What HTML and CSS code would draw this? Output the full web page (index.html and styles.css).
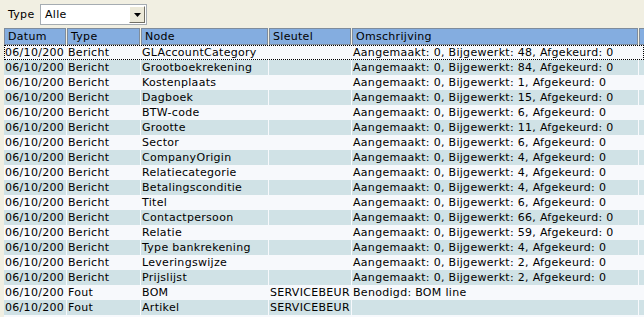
FILE: index.html
```html
<!DOCTYPE html>
<html>
<head>
<meta charset="utf-8">
<link rel="stylesheet" href="styles.css">
</head>
<body>
<div class="toolbar">
  <span class="lbl">Type</span>
  <div class="select">
    <span class="val">Alle</span>
    <span class="btn"><svg width="7" height="4" viewBox="0 0 7 4"><path d="M0 0h7L3.5 4z" fill="#000"/></svg></span>
  </div>
</div>
<div class="grid">
  <div class="row head">
    <div class="c">Datum</div><div class="c">Type</div><div class="c">Node</div><div class="c">Sleutel</div><div class="c">Omschrijving</div><div class="c"></div>
  </div>
  <div class="body">
  <div class="row focus"><div class="c">06/10/200</div><div class="c">Bericht</div><div class="c">GLAccountCategory</div><div class="c"></div><div class="c">Aangemaakt: 0, Bijgewerkt: 48, Afgekeurd: 0</div><div class="c"></div></div>
  <div class="row alt"><div class="c">06/10/200</div><div class="c">Bericht</div><div class="c">Grootboekrekening</div><div class="c"></div><div class="c">Aangemaakt: 0, Bijgewerkt: 84, Afgekeurd: 0</div><div class="c"></div></div>
  <div class="row"><div class="c">06/10/200</div><div class="c">Bericht</div><div class="c">Kostenplaats</div><div class="c"></div><div class="c">Aangemaakt: 0, Bijgewerkt: 1, Afgekeurd: 0</div><div class="c"></div></div>
  <div class="row alt"><div class="c">06/10/200</div><div class="c">Bericht</div><div class="c">Dagboek</div><div class="c"></div><div class="c">Aangemaakt: 0, Bijgewerkt: 15, Afgekeurd: 0</div><div class="c"></div></div>
  <div class="row"><div class="c">06/10/200</div><div class="c">Bericht</div><div class="c">BTW-code</div><div class="c"></div><div class="c">Aangemaakt: 0, Bijgewerkt: 6, Afgekeurd: 0</div><div class="c"></div></div>
  <div class="row alt"><div class="c">06/10/200</div><div class="c">Bericht</div><div class="c">Grootte</div><div class="c"></div><div class="c">Aangemaakt: 0, Bijgewerkt: 11, Afgekeurd: 0</div><div class="c"></div></div>
  <div class="row"><div class="c">06/10/200</div><div class="c">Bericht</div><div class="c">Sector</div><div class="c"></div><div class="c">Aangemaakt: 0, Bijgewerkt: 6, Afgekeurd: 0</div><div class="c"></div></div>
  <div class="row alt"><div class="c">06/10/200</div><div class="c">Bericht</div><div class="c">CompanyOrigin</div><div class="c"></div><div class="c">Aangemaakt: 0, Bijgewerkt: 4, Afgekeurd: 0</div><div class="c"></div></div>
  <div class="row"><div class="c">06/10/200</div><div class="c">Bericht</div><div class="c">Relatiecategorie</div><div class="c"></div><div class="c">Aangemaakt: 0, Bijgewerkt: 4, Afgekeurd: 0</div><div class="c"></div></div>
  <div class="row alt"><div class="c">06/10/200</div><div class="c">Bericht</div><div class="c">Betalingsconditie</div><div class="c"></div><div class="c">Aangemaakt: 0, Bijgewerkt: 4, Afgekeurd: 0</div><div class="c"></div></div>
  <div class="row"><div class="c">06/10/200</div><div class="c">Bericht</div><div class="c">Titel</div><div class="c"></div><div class="c">Aangemaakt: 0, Bijgewerkt: 6, Afgekeurd: 0</div><div class="c"></div></div>
  <div class="row alt"><div class="c">06/10/200</div><div class="c">Bericht</div><div class="c">Contactpersoon</div><div class="c"></div><div class="c">Aangemaakt: 0, Bijgewerkt: 66, Afgekeurd: 0</div><div class="c"></div></div>
  <div class="row"><div class="c">06/10/200</div><div class="c">Bericht</div><div class="c">Relatie</div><div class="c"></div><div class="c">Aangemaakt: 0, Bijgewerkt: 59, Afgekeurd: 0</div><div class="c"></div></div>
  <div class="row alt"><div class="c">06/10/200</div><div class="c">Bericht</div><div class="c">Type bankrekening</div><div class="c"></div><div class="c">Aangemaakt: 0, Bijgewerkt: 4, Afgekeurd: 0</div><div class="c"></div></div>
  <div class="row"><div class="c">06/10/200</div><div class="c">Bericht</div><div class="c">Leveringswijze</div><div class="c"></div><div class="c">Aangemaakt: 0, Bijgewerkt: 2, Afgekeurd: 0</div><div class="c"></div></div>
  <div class="row alt"><div class="c">06/10/200</div><div class="c">Bericht</div><div class="c">Prijslijst</div><div class="c"></div><div class="c">Aangemaakt: 0, Bijgewerkt: 2, Afgekeurd: 0</div><div class="c"></div></div>
  <div class="row"><div class="c">06/10/200</div><div class="c">Fout</div><div class="c">BOM</div><div class="c">SERVICEBEUR</div><div class="c">Benodigd: BOM line</div><div class="c"></div></div>
  <div class="row alt"><div class="c">06/10/200</div><div class="c">Fout</div><div class="c">Artikel</div><div class="c">SERVICEBEUR</div><div class="c"></div><div class="c"></div></div>
  </div>
</div>
</body>
</html>
```
FILE: styles.css
```css
html, body {
  margin: 0;
  padding: 0;
  background: #f1efe2;
  overflow: hidden;
  height: 317px;
}
body {
  font-family: "DejaVu Sans", Verdana, sans-serif;
  font-size: 11px;
  letter-spacing: 0.3px;
  color: #000;
}
.toolbar {
  height: 28px;
  display: flex;
  align-items: flex-start;
  padding: 4px 0 0 8px;
  box-sizing: border-box;
}
.lbl {
  line-height: 21px;
  width: 32px;
}
.select {
  width: 107px;
  height: 21px;
  box-sizing: border-box;
  border: 1px solid #a5acb2;
  background: #fff;
  display: flex;
  align-items: stretch;
  justify-content: space-between;
}
.val {
  line-height: 19px;
  padding-left: 4px;
}
.btn {
  width: 16px;
  margin: 1px;
  box-sizing: border-box;
  background: #ece9d8;
  border-top: 1px solid #fff;
  border-left: 1px solid #fff;
  border-right: 1px solid #716f64;
  border-bottom: 1px solid #716f64;
  display: flex;
  align-items: center;
  justify-content: center;
}
.grid {
  padding-left: 4px;
}
.body {
  background: #f7f9fc;
  height: 272px;
}
.row {
  display: grid;
  grid-template-columns: 62px 73px 127px 82px 286px 10px;
  column-gap: 1px;
  height: 15px;
  background: #f7f9fc;
  white-space: nowrap;
}
.row .c {
  overflow: hidden;
  line-height: 15px;
  padding-left: 1px;
  background: #f7f9fc;
}
.row.alt .c { background: #d0e2e6; }
.row.focus {
  outline: 1px dotted #000;
  outline-offset: -1px;
}
.row.head {
  height: 17px;
  background: #f1efe2;
}
.row.head .c {
  background: #84ade0;
  border: 1px solid #7f8c9c;
  line-height: 15px;
  padding-left: 3px;
}
```
